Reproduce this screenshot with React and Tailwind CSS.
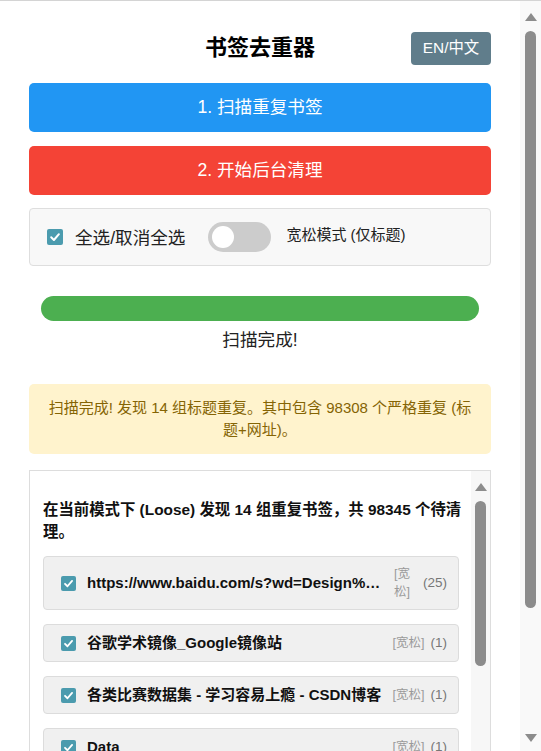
import React from "react";

function Check({ size = 15 }) {
  return (
    <span
      className="flex shrink-0 items-center justify-center rounded-[2px] bg-[#4b9bae]"
      style={{ width: size, height: size }}
    >
      <svg width={size - 4} height={size - 4} viewBox="0 0 12 12" fill="none">
        <path d="M2.2 6.3 L4.9 9 L9.9 3.2" stroke="white" strokeWidth="2" strokeLinecap="round" strokeLinejoin="round" />
      </svg>
    </span>
  );
}

function Item({ title, count, narrowTag }) {
  return (
    <div className="mb-[14px] flex items-center rounded-[4px] border border-[#dcdcdc] bg-[#f0f0f0] py-2 pl-[17px] pr-[11px]">
      <Check size={15} />
      <div className="ml-[11px] min-w-0 flex-1 truncate text-[15px] font-bold leading-[20px] text-[#111]">{title}</div>
      {narrowTag ? (
        <div className="ml-[12px] w-[17px] shrink-0 text-[12.5px] leading-[18px] text-[#9a9a9a]">[宽松]</div>
      ) : (
        <div className="ml-[10px] shrink-0 whitespace-nowrap text-[12.5px] leading-[18px] text-[#9a9a9a]">[宽松]</div>
      )}
      <div className={(narrowTag ? "ml-[12px]" : "ml-[6px]") + " shrink-0 whitespace-nowrap text-[13.5px] leading-[20px] text-[#777]"}>({count})</div>
    </div>
  );
}

function UpArrow() {
  return (
    <svg width="12" height="8" viewBox="0 0 12 8"><path d="M6 0 L12 8 L0 8 Z" fill="#8c8c8c" /></svg>
  );
}
function DownArrow() {
  return (
    <svg width="12" height="8" viewBox="0 0 12 8"><path d="M0 0 L12 0 L6 8 Z" fill="#8c8c8c" /></svg>
  );
}

export default function App() {
  return (
    <div
      className="flex h-[751px] w-[541px] overflow-hidden border-t border-[#d4d4d4] bg-white text-[#333]"
      style={{ fontFamily: '"Liberation Sans", Arial, "Noto Sans CJK SC", sans-serif' }}
    >
      <div className="flex w-[520px] flex-col px-[29px] pt-[30px]">
        <div className="grid h-[34px] grid-cols-[1fr_auto_1fr] items-center">
          <div />
          <h1 className="text-[22px] font-bold leading-none text-black">书签去重器</h1>
          <div className="flex justify-end">
            <button className="flex h-[33px] w-[80px] items-center justify-center rounded-[4px] bg-[#607d8b] text-[15.4px] text-white">
              EN/中文
            </button>
          </div>
        </div>

        <button className="mt-[18px] flex h-[49px] items-center justify-center rounded-[5px] bg-[#2196f3] text-[17.6px] text-white">
          1. 扫描重复书签
        </button>
        <button className="mt-[14px] flex h-[49px] items-center justify-center rounded-[5px] bg-[#f44336] text-[17.6px] text-white">
          2. 开始后台清理
        </button>

        <div className="mt-[13px] flex h-[58px] items-center rounded-[4px] border border-[#dedede] bg-[#f8f8f8] pl-[17px]">
          <Check size={16} />
          <span className="ml-[12px] mt-[3px] text-[17.6px] text-[#222]">全选/取消全选</span>
          <div className="ml-[23px] flex h-[30px] w-[63px] shrink-0 items-center rounded-full bg-[#cccccc] pl-[4px]">
            <div className="h-[22px] w-[22px] rounded-full bg-white" />
          </div>
          <span className="ml-[15px] mb-[3px] text-[15px] text-[#222]">宽松模式 (仅标题)</span>
        </div>

        <div className="mx-[12px] mt-[30px] h-[25px] rounded-full bg-[#4caf50]" />
        <div className="mt-[7px] text-center text-[17.6px] leading-[24px] text-[#222]">扫描完成!</div>

        <div className="mt-[32px] rounded-[5px] bg-[#fff3cd] px-[16px] py-[13px] text-center text-[15px] leading-[22px] text-[#856404]">
          扫描完成! 发现 14 组标题重复。其中包含 98308 个严格重复 (标题+网址)。
        </div>

        <div className="mt-[16px] flex min-h-0 flex-1 border border-b-0 border-[#dddddd]">
          <div className="min-w-0 flex-1 pl-[13px] pr-[8px] pt-[28px]">
            <div className="whitespace-nowrap text-[15.4px] font-bold leading-[22px] text-[#111]">
              在当前模式下 (Loose) 发现 14 组重复书签，共 98345 个待清
              <br />
              理。
            </div>
            <div className="mr-[4px] mt-[13px]">
              <Item title="https://www.baidu.com/s?wd=Design%20Patterns%20Elements%20of%20Reusable" count="25" narrowTag />
              <Item title="谷歌学术镜像_Google镜像站" count="1" />
              <Item title="各类比赛数据集 - 学习容易上瘾 - CSDN博客" count="1" />
              <Item title="Data" count="1" />
              <Item title="GitHub" count="1" />
            </div>
          </div>
          <div className="flex w-[19px] shrink-0 flex-col items-center bg-[#f7f7f7] pt-[12px]">
            <UpArrow />
            <div className="mt-[10px] h-[165px] w-[11px] rounded-full bg-[#8c8c8c]" />
          </div>
        </div>
      </div>

      <div className="flex w-[21px] flex-col items-center bg-[#f9f9f9] pb-[9px] pt-[12px]">
        <UpArrow />
        <div className="mt-[10px] h-[577px] w-[11px] rounded-full bg-[#8c8c8c]" />
        <div className="flex-1" />
        <DownArrow />
      </div>
    </div>
  );
}
